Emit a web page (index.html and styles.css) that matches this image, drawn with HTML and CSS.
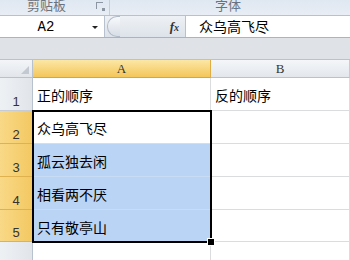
FILE: index.html
```html
<!DOCTYPE html>
<html lang="zh">
<head>
    <meta charset="UTF-8">
    <title>顺序</title>
    <link rel="stylesheet" href="styles.css">
</head>
<body>
	<div class="ribbon">
		<div class="group group-clip">
			<span class="group-label">剪贴板</span>
			<span class="launcher"></span>
		</div>
		<div class="group group-font">
			<span class="group-label">字体</span>
		</div>
	</div>
	<div class="formula-bar">
		<div class="name-box">
			<span class="name">A2</span>
			<span class="drop"></span>
		</div>
		<div class="fx-zone">
			<span class="knob"></span>
			<span class="fx">f<i>x</i></span>
		</div>
		<div class="formula">众乌高飞尽</div>
	</div>
	<div class="gap"></div>
	<div class="sheet">
		<div class="corner"><span class="tri"></span></div>
		<div class="col-head on">A</div>
		<div class="col-head">B</div>

		<div class="row-head">1</div>
		<div class="cell">正的顺序</div>
		<div class="cell">反的顺序</div>

		<div class="row-head on">2</div>
		<div class="cell">众乌高飞尽</div>
		<div class="cell"></div>

		<div class="row-head on">3</div>
		<div class="cell sel">孤云独去闲</div>
		<div class="cell"></div>

		<div class="row-head on">4</div>
		<div class="cell sel">相看两不厌</div>
		<div class="cell"></div>

		<div class="row-head on">5</div>
		<div class="cell sel">只有敬亭山</div>
		<div class="cell"></div>

		<div class="row-head"></div>
		<div class="cell last"></div>
		<div class="cell last"></div>

		<div class="selection"><span class="handle"></span></div>
	</div>
</body>
</html>
```

FILE: styles.css
```css
body{
	margin: 0;
	width: 350px;
	height: 260px;
	overflow: hidden;
	background: #fff;
	font-family: "Noto Sans CJK SC", "Liberation Sans", sans-serif;
}
.ribbon{
	display: flex;
	height: 15px;
	background: linear-gradient(#dfe7f1, #e9eef5);
	border-bottom: 1px solid #b6c2d2;
	overflow: hidden;
}
.group{
	position: relative;
	display: flex;
	justify-content: center;
}
.group-clip{
	width: 110px;
	padding-right: 16px;
	box-sizing: border-box;
	border-right: 1px solid #c4cfdc;
}
.group-font{
	width: 236px;
}
.group-label{
	font-size: 13px;
	line-height: 13px;
	margin-top: -2px;
	color: #6b7380;
}
.launcher{
	position: absolute;
	right: 6px;
	top: 2px;
	width: 6px;
	height: 6px;
	border-left: 1px solid #8c95a2;
	border-top: 1px solid #8c95a2;
}
.launcher::after{
	content: "";
	position: absolute;
	right: -2px;
	bottom: -2px;
	width: 3px;
	height: 3px;
	background: #8c95a2;
}
.formula-bar{
	display: flex;
	height: 21px;
	background: #e8ecf1;
	border-bottom: 1px solid #a9b4c2;
}
.name-box{
	position: relative;
	width: 104px;
	background: #fff;
	border-right: 1px solid #b8c2ce;
	display: flex;
	align-items: center;
	justify-content: center;
}
.name{
	font-family: "Liberation Mono", monospace;
	font-size: 14px;
	margin-left: -12px;
	color: #000;
}
.drop{
	position: absolute;
	right: 6px;
	top: 10px;
	border-left: 3px solid transparent;
	border-right: 3px solid transparent;
	border-top: 3px solid #222;
}
.fx-zone{
	display: flex;
	align-items: center;
	width: 78px;
	padding-left: 2px;
	background: linear-gradient(#eef1f5, #dde3ea);
	border-right: 1px solid #b8c2ce;
}
.knob{
	width: 12px;
	height: 19px;
	border-radius: 10px 0 0 10px;
	border: 1px solid #b2bcc8;
	border-right: none;
	background: linear-gradient(#f7f9fb, #d8dee6);
}
.fx{
	margin-left: auto;
	margin-right: 6px;
	font-family: "Liberation Serif", serif;
	font-style: italic;
	font-weight: bold;
	font-size: 13px;
	color: #333;
}
.fx i{
	font-size: 10px;
}
.formula{
	flex: 1;
	background: #fff;
	padding-left: 13px;
	font-size: 14px;
	line-height: 21px;
	color: #000;
}
.gap{
	height: 21px;
	background: #dfe3e8;
	border-bottom: 1px solid #b9c3cf;
}
.sheet{
	position: relative;
	display: grid;
	grid-template-columns: 33px 178px 1fr;
	grid-template-rows: 18px 33px 33px 33px 33px 32px 20px;
}
.corner{
	position: relative;
	background: linear-gradient(#f3f5f8, #e2e6eb);
	border-right: 1px solid #b8c2ce;
	border-bottom: 1px solid #b8c2ce;
	box-sizing: border-box;
}
.tri{
	position: absolute;
	right: 3px;
	bottom: 3px;
	border-left: 8px solid transparent;
	border-bottom: 8px solid #c3c9d1;
}
.col-head{
	text-align: center;
	font-family: "Liberation Serif", serif;
	font-size: 13px;
	line-height: 17px;
	color: #333;
	background: linear-gradient(#f4f6f9, #e3e7ec);
	border-right: 1px solid #c5ccd6;
	border-bottom: 1px solid #b8c2ce;
	box-sizing: border-box;
}
.col-head.on{
	background: linear-gradient(#fbe7a6, #f4c65a);
	border-right-color: #e0ad45;
	border-bottom-color: #d9a63d;
}
.row-head{
	display: flex;
	align-items: flex-end;
	justify-content: center;
	padding-bottom: 1px;
	font-family: "Liberation Sans", sans-serif;
	font-size: 13px;
	line-height: 14px;
	color: #333;
	background: linear-gradient(90deg, #eef1f4, #e1e5ea);
	border-right: 1px solid #b8c2ce;
	border-bottom: 1px solid #c5ccd6;
	box-sizing: border-box;
}
.row-head.on{
	background: linear-gradient(90deg, #f9d987, #f3c862);
	border-right-color: #d9a63d;
	border-bottom-color: #e0b24f;
}
.cell{
	padding-left: 4px;
	font-size: 14px;
	line-height: 33px;
	padding-top: 1px;
	color: #000;
	border-right: 1px solid #dadcdd;
	border-bottom: 1px solid #dadcdd;
	box-sizing: border-box;
	overflow: hidden;
	white-space: nowrap;
}
.cell.sel{
	background: #bad4f5;
	border-bottom-color: #c8dcf4;
}
.cell.last{
	border-bottom: none;
}
/* selection frame sits on the grid area A2:A5 */
.selection{
	position: absolute;
	grid-column: 2 / 3;
	grid-row: 3 / 7;
	top: -1px;
	left: -1px;
	right: -1px;
	bottom: -1px;
	border: 2px solid #000;
	pointer-events: none;
}
.handle{
	position: absolute;
	right: -5px;
	bottom: -5px;
	width: 6px;
	height: 6px;
	background: #000;
	border: 1px solid #fff;
}
```
